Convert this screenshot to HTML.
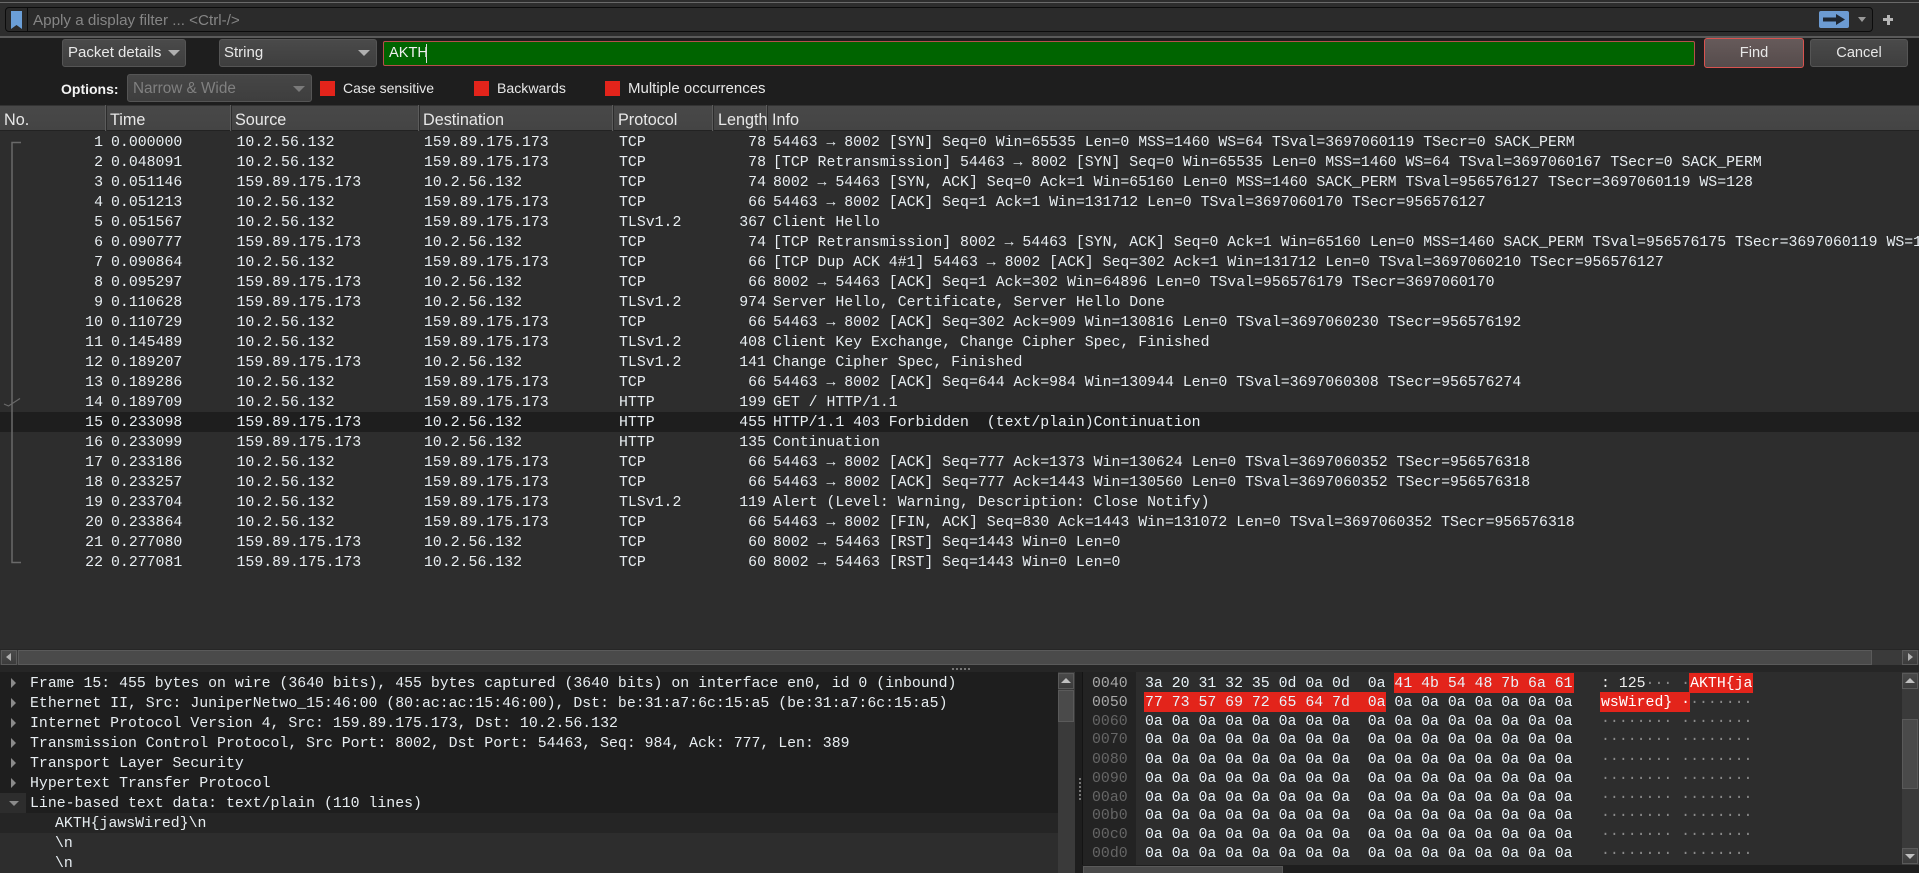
<!DOCTYPE html>
<html><head><meta charset="utf-8"><title>Wireshark</title>
<style>
html,body{margin:0;padding:0;width:1919px;height:873px;overflow:hidden;background:#1e1e1e}
body{position:relative;font-family:"Liberation Sans",sans-serif;color:#e8e8e8}
div,span,pre{position:absolute;box-sizing:border-box;margin:0;white-space:pre}
.m{font-family:"Liberation Mono",monospace;font-size:14.85px;line-height:20px;color:#e8eef2}
.u{font-size:14.3px;line-height:20px}
.r{left:0;width:1919px;height:20px}
.r span{top:0}
.n{right:1816px}.t{left:111px}.s{left:236.5px}.d{left:424px}.p{left:619px}.l{right:1153px}.i{left:773px}
.combo{background:linear-gradient(#4a4a4a,#3e3e3e);border:1px solid #555;border-radius:3px;height:28px;top:39px}
.arr{width:0;height:0;border-left:6px solid transparent;border-right:6px solid transparent;border-top:6px solid #aaa}
.cb{width:15px;height:15px;background:#e3241b;top:81px}
.h{top:105px;height:26px;border-right:1px solid #2c2c2c;box-shadow:inset -1px 0 0 #5c5c5c}
.ht{top:110px;font-size:16.2px}
.tr{width:0;height:0;left:11px;border-top:5px solid transparent;border-bottom:5px solid transparent;border-left:5px solid #8a8a8a}
.off{left:1092px;color:#666}
.hx{left:1145px;color:#e8f2f8}
.as{left:1601px;color:#8a8a8a}
.red{background:#e3241b;height:20px}
.btn{background:linear-gradient(#4a4a4a,#3c3c3c);border:1px solid #5a5a5a}
</style></head><body>
<!-- top bar -->
<div style="left:0;top:0;width:1919px;height:36px;background:#2d2d2d"></div>
<div style="left:0;top:2px;width:1919px;height:1px;background:#6a6a6a"></div>
<div style="left:5px;top:7px;width:1868px;height:25px;background:#2b2b2b;border:1px solid #0c0c0c;border-radius:4px"></div>
<div style="left:27px;top:8px;width:1px;height:23px;background:#0c0c0c"></div>
<svg style="position:absolute;left:10px;top:10px" width="13" height="20"><path d="M1 1H12V19L6.5 15L1 19Z" fill="#6b9fd8"/></svg>
<div class="u" style="left:33px;top:11px;color:#858585;font-size:15.2px">Apply a display filter ... &lt;Ctrl-/&gt;</div>
<svg style="position:absolute;left:1819px;top:11px" width="30" height="17"><rect width="30" height="17" rx="2" fill="#6c9bd2"/><path d="M4 6.5H17V3L26 8.5L17 14V10.5H4Z" fill="#1e2630"/></svg>
<div class="arr" style="left:1858px;top:17px;border-left-width:4px;border-right-width:4px;border-top-width:5px;border-top-color:#9a9a9a"></div>
<div style="left:1883px;top:18px;width:10px;height:3px;background:#b5b5b5"></div>
<div style="left:1886.5px;top:14.500px;width:3px;height:10px;background:#b5b5b5"></div>
<div style="left:0;top:36px;width:1919px;height:2px;background:#5a5a5a"></div>
<!-- find bar -->
<div class="combo" style="left:62px;width:124px"></div>
<div class="u" style="left:68px;top:43px;font-size:15px">Packet details</div>
<div class="arr" style="left:168px;top:50px;border-top-color:#b0b0b0"></div>
<div class="combo" style="left:219px;width:158px"></div>
<div class="u" style="left:224px;top:43px;font-size:15px">String</div>
<div class="arr" style="left:358px;top:50px;border-top-color:#b0b0b0"></div>
<div style="left:383px;top:41px;width:1312px;height:25px;background:#006400;border:1px solid #b5504a;border-radius:2px"></div>
<div class="u" style="left:389px;top:43px;font-size:14.6px;color:#f0f0f0">AKTH</div>
<div style="left:426px;top:44px;width:1px;height:19px;background:#ddd"></div>
<div style="left:1704px;top:38px;width:100px;height:30px;background:linear-gradient(#665a5a,#564c4c);border:1px solid #d9534f;border-radius:3px"></div>
<div class="u" style="left:1704px;width:100px;text-align:center;top:43px;font-size:14.6px">Find</div>
<div class="combo" style="left:1810px;width:98px"></div>
<div class="u" style="left:1810px;width:98px;text-align:center;top:43px;font-size:14.6px">Cancel</div>
<div class="u" style="left:61px;top:79px;font-weight:bold;color:#f4f4f4;font-size:14px">Options:</div>
<div class="combo" style="left:127px;top:74px;width:185px;background:linear-gradient(#464646,#3e3e3e)"></div>
<div class="u" style="left:133px;top:79px;color:#808080;font-size:15.3px">Narrow &amp; Wide</div>
<div class="arr" style="left:293px;top:86px;border-top-color:#7a7a7a"></div>
<div class="cb" style="left:320px"></div><div class="u" style="left:343px;top:78px;font-size:14px">Case sensitive</div>
<div class="cb" style="left:474px"></div><div class="u" style="left:497px;top:78px;font-size:14.1px">Backwards</div>
<div class="cb" style="left:605px"></div><div class="u" style="left:628px;top:79px;font-size:15px">Multiple occurrences</div>
<!-- header -->
<div style="left:0;top:105px;width:1919px;height:26px;background:linear-gradient(#484848,#444);border-top:1px solid #333;border-bottom:1px solid #222"></div>
<div class="h" style="left:0;width:107px"></div><div class="h" style="left:107px;width:125px"></div><div class="h" style="left:232px;width:188px"></div><div class="h" style="left:420px;width:194px"></div><div class="h" style="left:614px;width:100px"></div><div class="h" style="left:714px;width:54px"></div>
<div class="u ht" style="left:4px">No.</div><div class="u ht" style="left:110px">Time</div><div class="u ht" style="left:235px">Source</div><div class="u ht" style="left:423px">Destination</div><div class="u ht" style="left:618px">Protocol</div><div class="u ht" style="left:718px">Length</div><div class="u ht" style="left:772px">Info</div>
<!-- packet list -->
<div style="left:0;top:131px;width:1919px;height:518px;background:#2d2d2d"></div>
<div style="left:0;top:412px;width:1919px;height:20px;background:#1e1e1e"></div>
<svg style="position:absolute;left:0;top:130px" width="30" height="440"><path d="M21 12.500H12V432.500H21" fill="none" stroke="#6a6a6a" stroke-width="1.500"/><path d="M4 274L8.500 276L20 268.500" fill="none" stroke="#6a6a6a" stroke-width="1.200"/></svg>
<div class="m r" style="top:133px"><span class="n">1</span><span class="t">0.000000</span><span class="s">10.2.56.132</span><span class="d">159.89.175.173</span><span class="p">TCP</span><span class="l">78</span><span class="i">54463 → 8002 [SYN] Seq=0 Win=65535 Len=0 MSS=1460 WS=64 TSval=3697060119 TSecr=0 SACK_PERM</span></div>
<div class="m r" style="top:153px"><span class="n">2</span><span class="t">0.048091</span><span class="s">10.2.56.132</span><span class="d">159.89.175.173</span><span class="p">TCP</span><span class="l">78</span><span class="i">[TCP Retransmission] 54463 → 8002 [SYN] Seq=0 Win=65535 Len=0 MSS=1460 WS=64 TSval=3697060167 TSecr=0 SACK_PERM</span></div>
<div class="m r" style="top:173px"><span class="n">3</span><span class="t">0.051146</span><span class="s">159.89.175.173</span><span class="d">10.2.56.132</span><span class="p">TCP</span><span class="l">74</span><span class="i">8002 → 54463 [SYN, ACK] Seq=0 Ack=1 Win=65160 Len=0 MSS=1460 SACK_PERM TSval=956576127 TSecr=3697060119 WS=128</span></div>
<div class="m r" style="top:193px"><span class="n">4</span><span class="t">0.051213</span><span class="s">10.2.56.132</span><span class="d">159.89.175.173</span><span class="p">TCP</span><span class="l">66</span><span class="i">54463 → 8002 [ACK] Seq=1 Ack=1 Win=131712 Len=0 TSval=3697060170 TSecr=956576127</span></div>
<div class="m r" style="top:213px"><span class="n">5</span><span class="t">0.051567</span><span class="s">10.2.56.132</span><span class="d">159.89.175.173</span><span class="p">TLSv1.2</span><span class="l">367</span><span class="i">Client Hello</span></div>
<div class="m r" style="top:233px"><span class="n">6</span><span class="t">0.090777</span><span class="s">159.89.175.173</span><span class="d">10.2.56.132</span><span class="p">TCP</span><span class="l">74</span><span class="i">[TCP Retransmission] 8002 → 54463 [SYN, ACK] Seq=0 Ack=1 Win=65160 Len=0 MSS=1460 SACK_PERM TSval=956576175 TSecr=3697060119 WS=128</span></div>
<div class="m r" style="top:253px"><span class="n">7</span><span class="t">0.090864</span><span class="s">10.2.56.132</span><span class="d">159.89.175.173</span><span class="p">TCP</span><span class="l">66</span><span class="i">[TCP Dup ACK 4#1] 54463 → 8002 [ACK] Seq=302 Ack=1 Win=131712 Len=0 TSval=3697060210 TSecr=956576127</span></div>
<div class="m r" style="top:273px"><span class="n">8</span><span class="t">0.095297</span><span class="s">159.89.175.173</span><span class="d">10.2.56.132</span><span class="p">TCP</span><span class="l">66</span><span class="i">8002 → 54463 [ACK] Seq=1 Ack=302 Win=64896 Len=0 TSval=956576179 TSecr=3697060170</span></div>
<div class="m r" style="top:293px"><span class="n">9</span><span class="t">0.110628</span><span class="s">159.89.175.173</span><span class="d">10.2.56.132</span><span class="p">TLSv1.2</span><span class="l">974</span><span class="i">Server Hello, Certificate, Server Hello Done</span></div>
<div class="m r" style="top:313px"><span class="n">10</span><span class="t">0.110729</span><span class="s">10.2.56.132</span><span class="d">159.89.175.173</span><span class="p">TCP</span><span class="l">66</span><span class="i">54463 → 8002 [ACK] Seq=302 Ack=909 Win=130816 Len=0 TSval=3697060230 TSecr=956576192</span></div>
<div class="m r" style="top:333px"><span class="n">11</span><span class="t">0.145489</span><span class="s">10.2.56.132</span><span class="d">159.89.175.173</span><span class="p">TLSv1.2</span><span class="l">408</span><span class="i">Client Key Exchange, Change Cipher Spec, Finished</span></div>
<div class="m r" style="top:353px"><span class="n">12</span><span class="t">0.189207</span><span class="s">159.89.175.173</span><span class="d">10.2.56.132</span><span class="p">TLSv1.2</span><span class="l">141</span><span class="i">Change Cipher Spec, Finished</span></div>
<div class="m r" style="top:373px"><span class="n">13</span><span class="t">0.189286</span><span class="s">10.2.56.132</span><span class="d">159.89.175.173</span><span class="p">TCP</span><span class="l">66</span><span class="i">54463 → 8002 [ACK] Seq=644 Ack=984 Win=130944 Len=0 TSval=3697060308 TSecr=956576274</span></div>
<div class="m r" style="top:393px"><span class="n">14</span><span class="t">0.189709</span><span class="s">10.2.56.132</span><span class="d">159.89.175.173</span><span class="p">HTTP</span><span class="l">199</span><span class="i">GET / HTTP/1.1</span></div>
<div class="m r" style="top:413px"><span class="n">15</span><span class="t">0.233098</span><span class="s">159.89.175.173</span><span class="d">10.2.56.132</span><span class="p">HTTP</span><span class="l">455</span><span class="i">HTTP/1.1 403 Forbidden  (text/plain)Continuation</span></div>
<div class="m r" style="top:433px"><span class="n">16</span><span class="t">0.233099</span><span class="s">159.89.175.173</span><span class="d">10.2.56.132</span><span class="p">HTTP</span><span class="l">135</span><span class="i">Continuation</span></div>
<div class="m r" style="top:453px"><span class="n">17</span><span class="t">0.233186</span><span class="s">10.2.56.132</span><span class="d">159.89.175.173</span><span class="p">TCP</span><span class="l">66</span><span class="i">54463 → 8002 [ACK] Seq=777 Ack=1373 Win=130624 Len=0 TSval=3697060352 TSecr=956576318</span></div>
<div class="m r" style="top:473px"><span class="n">18</span><span class="t">0.233257</span><span class="s">10.2.56.132</span><span class="d">159.89.175.173</span><span class="p">TCP</span><span class="l">66</span><span class="i">54463 → 8002 [ACK] Seq=777 Ack=1443 Win=130560 Len=0 TSval=3697060352 TSecr=956576318</span></div>
<div class="m r" style="top:493px"><span class="n">19</span><span class="t">0.233704</span><span class="s">10.2.56.132</span><span class="d">159.89.175.173</span><span class="p">TLSv1.2</span><span class="l">119</span><span class="i">Alert (Level: Warning, Description: Close Notify)</span></div>
<div class="m r" style="top:513px"><span class="n">20</span><span class="t">0.233864</span><span class="s">10.2.56.132</span><span class="d">159.89.175.173</span><span class="p">TCP</span><span class="l">66</span><span class="i">54463 → 8002 [FIN, ACK] Seq=830 Ack=1443 Win=131072 Len=0 TSval=3697060352 TSecr=956576318</span></div>
<div class="m r" style="top:533px"><span class="n">21</span><span class="t">0.277080</span><span class="s">159.89.175.173</span><span class="d">10.2.56.132</span><span class="p">TCP</span><span class="l">60</span><span class="i">8002 → 54463 [RST] Seq=1443 Win=0 Len=0</span></div>
<div class="m r" style="top:553px"><span class="n">22</span><span class="t">0.277081</span><span class="s">159.89.175.173</span><span class="d">10.2.56.132</span><span class="p">TCP</span><span class="l">60</span><span class="i">8002 → 54463 [RST] Seq=1443 Win=0 Len=0</span></div>
<!-- horizontal scrollbar -->
<div style="left:0;top:649px;width:1919px;height:16px;background:#3a3a3a;border-top:1px solid #262626"></div>
<div class="btn" style="left:1px;top:650px;width:16px;height:15px"></div>
<div style="left:6px;top:653px;width:0;height:0;border-top:4.500px solid transparent;border-bottom:4.500px solid transparent;border-right:5px solid #b0b0b0"></div>
<div style="left:18px;top:650px;width:1854px;height:15px;background:#4a4a4a;border:1px solid #5a5a5a"></div>
<div class="btn" style="left:1902px;top:650px;width:16px;height:15px"></div>
<div style="left:1908px;top:653px;width:0;height:0;border-top:4.500px solid transparent;border-bottom:4.500px solid transparent;border-left:5px solid #b0b0b0"></div>
<div style="left:0;top:665px;width:1919px;height:7px;background:#262626"></div>
<div style="left:952px;top:668px;width:18px;height:2px;background:repeating-linear-gradient(90deg,#777 0 2px,transparent 2px 4px)"></div>
<!-- details -->
<div style="left:0;top:672px;width:1058px;height:201px;background:#1e1e1e"></div>
<div style="left:0;top:793px;width:26px;height:20px;background:#2d2d2d"></div>
<div style="left:0;top:813px;width:1058px;height:20px;background:#252525"></div>
<div style="left:0;top:833px;width:1058px;height:40px;background:#2d2d2d"></div>
<div class="tr" style="top:678px"></div><div class="tr" style="top:698px"></div><div class="tr" style="top:718px"></div><div class="tr" style="top:738px"></div><div class="tr" style="top:758px"></div><div class="tr" style="top:778px"></div>
<div style="left:9px;top:801px;width:0;height:0;border-left:5px solid transparent;border-right:5px solid transparent;border-top:5px solid #8a8a8a"></div>
<div class="m" style="left:30px;top:674px">Frame 15: 455 bytes on wire (3640 bits), 455 bytes captured (3640 bits) on interface en0, id 0 (inbound)</div>
<div class="m" style="left:30px;top:694px">Ethernet II, Src: JuniperNetwo_15:46:00 (80:ac:ac:15:46:00), Dst: be:31:a7:6c:15:a5 (be:31:a7:6c:15:a5)</div>
<div class="m" style="left:30px;top:714px">Internet Protocol Version 4, Src: 159.89.175.173, Dst: 10.2.56.132</div>
<div class="m" style="left:30px;top:734px">Transmission Control Protocol, Src Port: 8002, Dst Port: 54463, Seq: 984, Ack: 777, Len: 389</div>
<div class="m" style="left:30px;top:754px">Transport Layer Security</div>
<div class="m" style="left:30px;top:774px">Hypertext Transfer Protocol</div>
<div class="m" style="left:30px;top:794px">Line-based text data: text/plain (110 lines)</div>
<div class="m" style="left:55px;top:814px">AKTH{jawsWired}\n</div>
<div class="m" style="left:55px;top:834px">\n</div>
<div class="m" style="left:55px;top:854px">\n</div>
<!-- details scrollbar -->
<div style="left:1058px;top:672px;width:17px;height:201px;background:#3a3a3a"></div>
<div class="btn" style="left:1058px;top:673px;width:16px;height:16px"></div>
<div style="left:1061px;top:678px;width:0;height:0;border-left:5px solid transparent;border-right:5px solid transparent;border-bottom:5px solid #c0c0c0"></div>
<div style="left:1058px;top:690px;width:16px;height:32px;background:#4a4a4a;border:1px solid #5a5a5a"></div>
<div style="left:1079px;top:778px;width:2px;height:22px;background:repeating-linear-gradient(#777 0 2px,transparent 2px 4px)"></div>
<!-- hex pane -->
<div style="left:1082px;top:672px;width:837px;height:194px;background:#2d2d2d;border-left:1px solid #141414"></div>
<div style="left:1083px;top:672px;width:53px;height:193px;background:#232323"></div>
<div class="red" style="left:1394px;top:673px;width:180px"></div>
<div class="red" style="left:1144px;top:692px;width:242px"></div>
<div class="red" style="left:1689px;top:673px;width:64px"></div>
<div class="red" style="left:1600px;top:692px;width:90px"></div>
<div class="m off" style="top:674px;color:#a8a8a8">0040</div><pre class="m hx" style="top:674px">3a 20 31 32 35 0d 0a 0d  0a 41 4b 54 48 7b 6a 61</pre><pre class="m as" style="top:674px"><span style="position:static;color:#eee">: 125</span>··· ·<span style="position:static;color:#fff">AKTH{ja</span></pre>
<div class="m off" style="top:693px;color:#a8a8a8">0050</div><pre class="m hx" style="top:693px">77 73 57 69 72 65 64 7d  0a 0a 0a 0a 0a 0a 0a 0a</pre><pre class="m as" style="top:693px"><span style="position:static;color:#fff">wsWired} ·</span>·······</pre>
<div class="m off" style="top:712px">0060</div><pre class="m hx" style="top:712px">0a 0a 0a 0a 0a 0a 0a 0a  0a 0a 0a 0a 0a 0a 0a 0a</pre><pre class="m as" style="top:712px">········ ········</pre>
<div class="m off" style="top:730px">0070</div><pre class="m hx" style="top:730px">0a 0a 0a 0a 0a 0a 0a 0a  0a 0a 0a 0a 0a 0a 0a 0a</pre><pre class="m as" style="top:730px">········ ········</pre>
<div class="m off" style="top:750px">0080</div><pre class="m hx" style="top:750px">0a 0a 0a 0a 0a 0a 0a 0a  0a 0a 0a 0a 0a 0a 0a 0a</pre><pre class="m as" style="top:750px">········ ········</pre>
<div class="m off" style="top:769px">0090</div><pre class="m hx" style="top:769px">0a 0a 0a 0a 0a 0a 0a 0a  0a 0a 0a 0a 0a 0a 0a 0a</pre><pre class="m as" style="top:769px">········ ········</pre>
<div class="m off" style="top:788px">00a0</div><pre class="m hx" style="top:788px">0a 0a 0a 0a 0a 0a 0a 0a  0a 0a 0a 0a 0a 0a 0a 0a</pre><pre class="m as" style="top:788px">········ ········</pre>
<div class="m off" style="top:806px">00b0</div><pre class="m hx" style="top:806px">0a 0a 0a 0a 0a 0a 0a 0a  0a 0a 0a 0a 0a 0a 0a 0a</pre><pre class="m as" style="top:806px">········ ········</pre>
<div class="m off" style="top:825px">00c0</div><pre class="m hx" style="top:825px">0a 0a 0a 0a 0a 0a 0a 0a  0a 0a 0a 0a 0a 0a 0a 0a</pre><pre class="m as" style="top:825px">········ ········</pre>
<div class="m off" style="top:844px">00d0</div><pre class="m hx" style="top:844px">0a 0a 0a 0a 0a 0a 0a 0a  0a 0a 0a 0a 0a 0a 0a 0a</pre><pre class="m as" style="top:844px">········ ········</pre>
<!-- hex scrollbars -->
<div style="left:1902px;top:672px;width:17px;height:193px;background:#3a3a3a"></div>
<div class="btn" style="left:1902px;top:673px;width:16px;height:16px"></div>
<div style="left:1905px;top:678px;width:0;height:0;border-left:5px solid transparent;border-right:5px solid transparent;border-bottom:5px solid #c0c0c0"></div>
<div style="left:1902px;top:719px;width:16px;height:70px;background:#4a4a4a;border:1px solid #5a5a5a"></div>
<div class="btn" style="left:1902px;top:848px;width:16px;height:16px"></div>
<div style="left:1905px;top:854px;width:0;height:0;border-left:5px solid transparent;border-right:5px solid transparent;border-top:5px solid #c0c0c0"></div>
<div style="left:1082px;top:865px;width:837px;height:8px;background:#1e1e1e"></div>
<div style="left:1083px;top:866px;width:200px;height:7px;background:#4a4a4a;border:1px solid #5a5a5a;border-bottom:0"></div>
</body></html>
